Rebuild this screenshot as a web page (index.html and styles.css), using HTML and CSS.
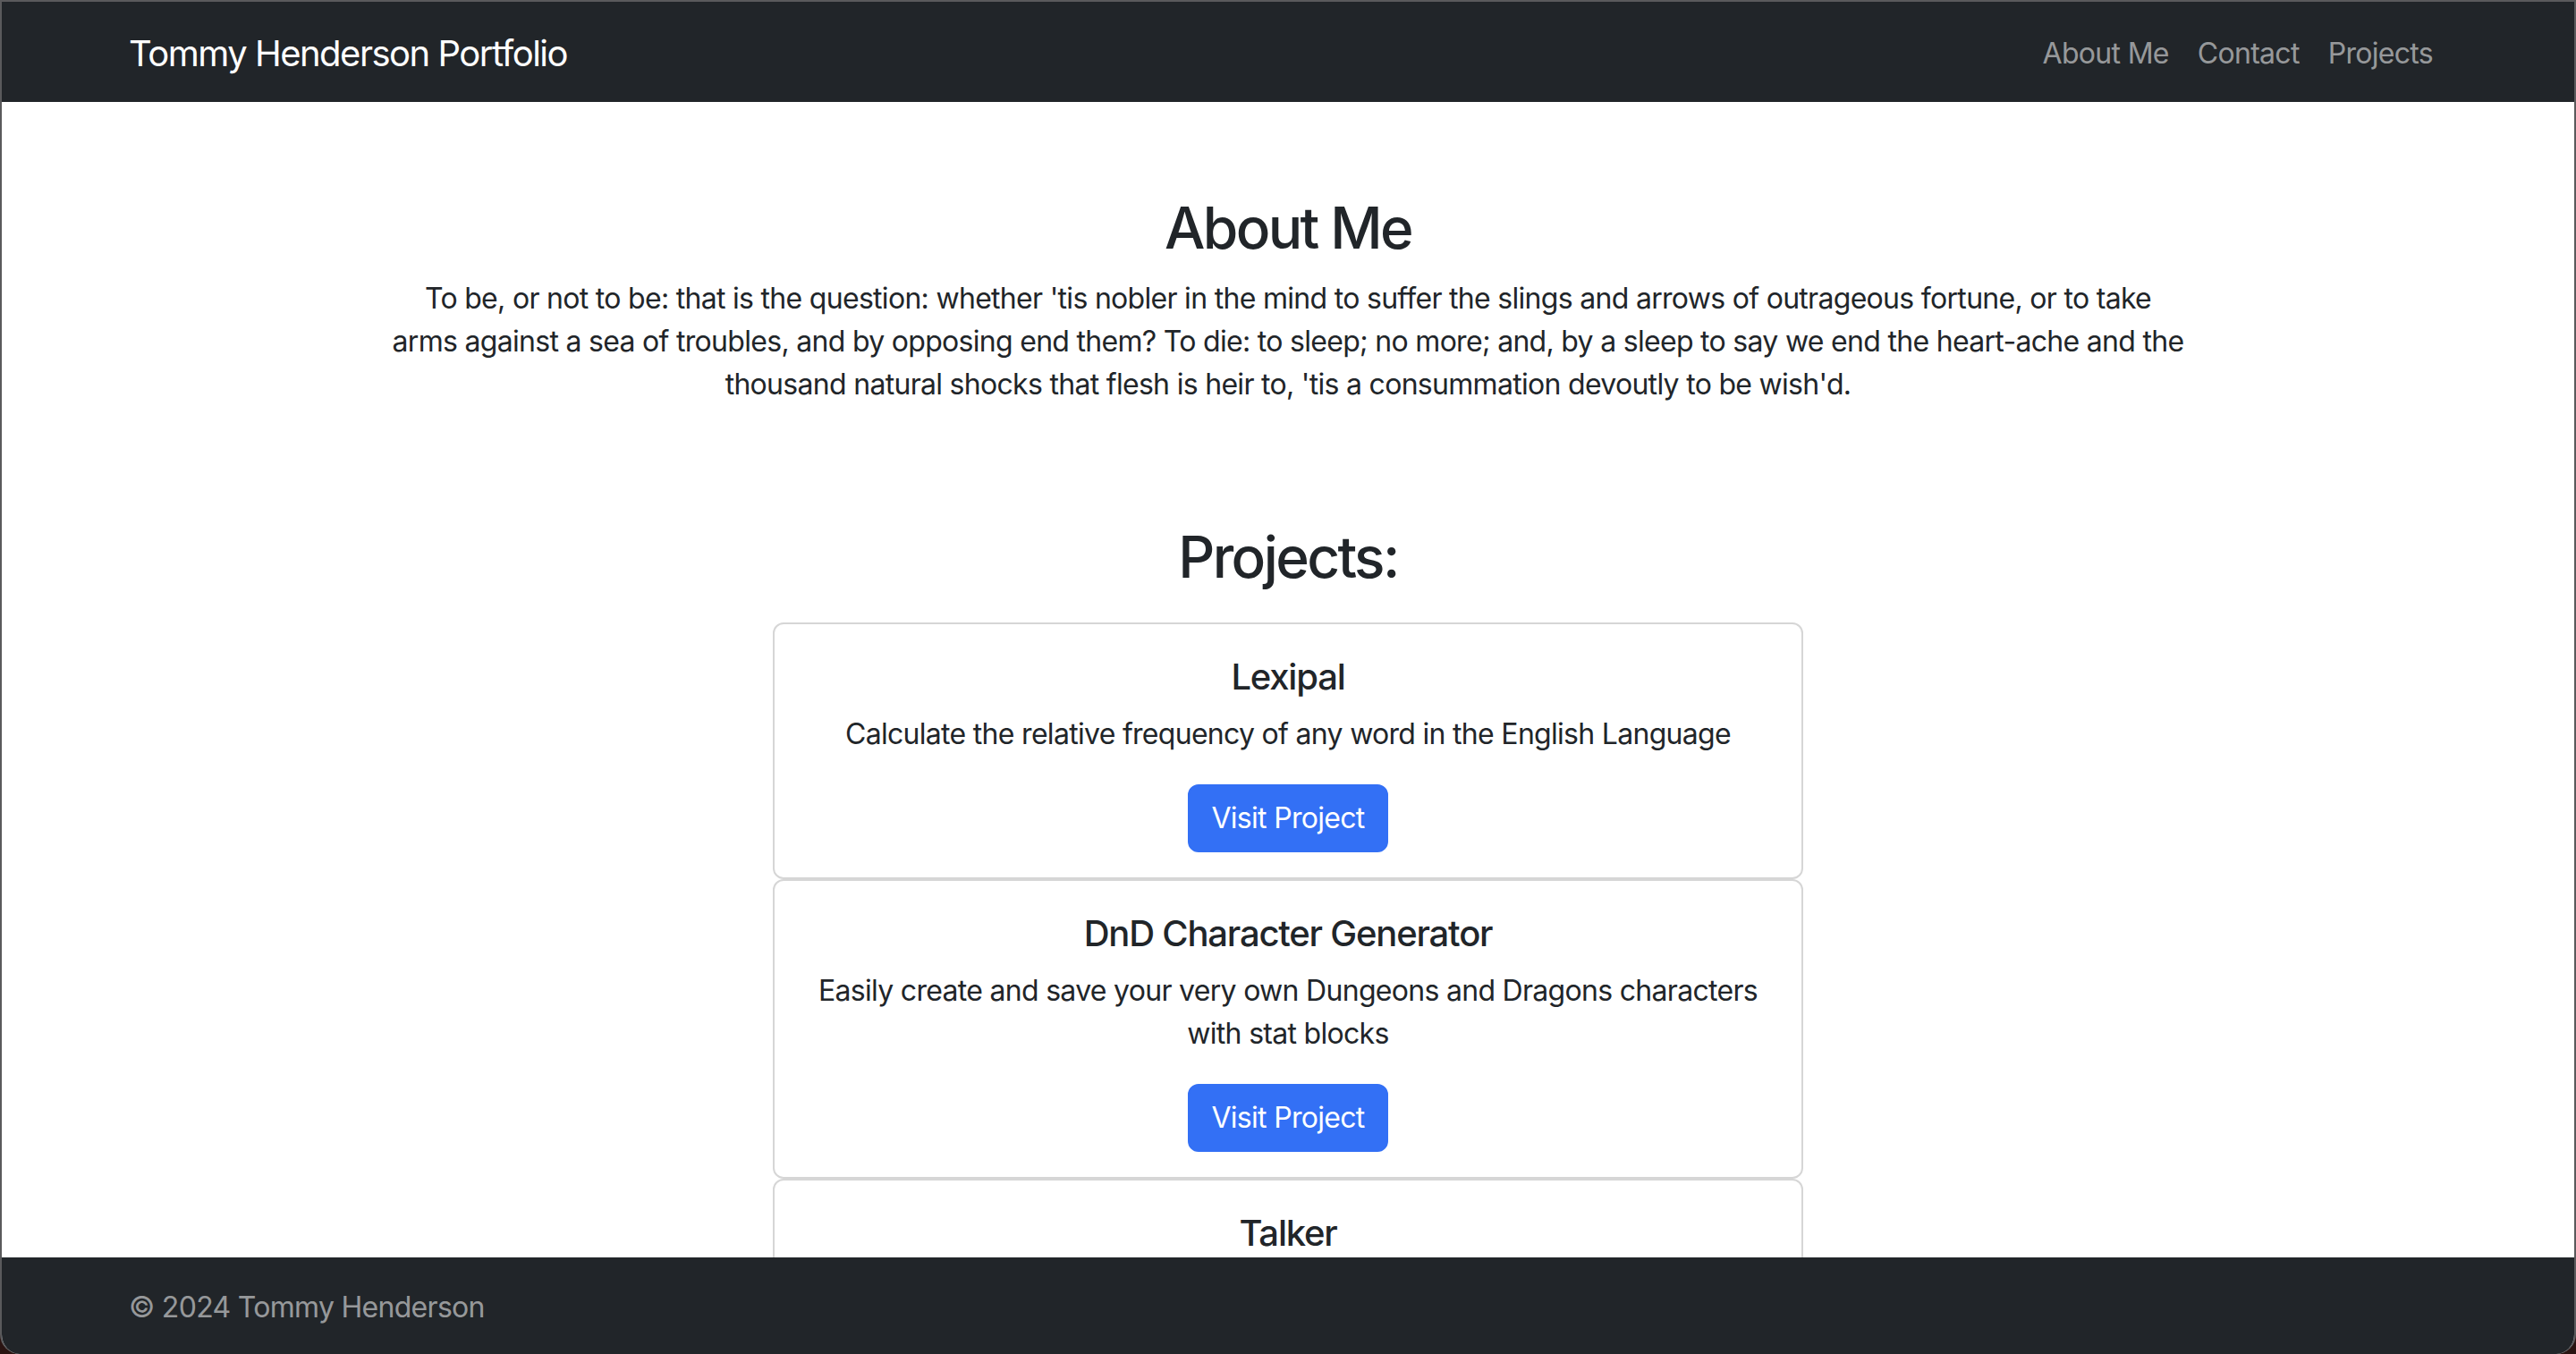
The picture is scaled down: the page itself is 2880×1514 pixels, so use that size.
FILE: index.html
```html
<!DOCTYPE html>
<html lang="en">
<head>
<meta charset="utf-8">
<title>Tommy Henderson Portfolio</title>
<link rel="stylesheet" href="styles.css">
</head>
<body>
<div class="frame">
  <nav class="navbar">
    <div class="container nav-inner">
      <a class="brand" href="#">Tommy Henderson Portfolio</a>
      <ul class="nav-links">
        <li><a href="#about">About Me</a></li>
        <li><a href="#contact">Contact</a></li>
        <li><a href="#projects">Projects</a></li>
      </ul>
    </div>
  </nav>
  <main class="main">
    <section class="about" id="about">
      <h2 class="heading">About Me</h2>
      <p class="about-text">To be, or not to be: that is the question: whether 'tis nobler in the mind to suffer the slings and arrows of outrageous fortune, or to take arms against a sea of troubles, and by opposing end them? To die: to sleep; no more; and, by a sleep to say we end the heart-ache and the thousand natural shocks that flesh is heir to, 'tis a consummation devoutly to be wish'd.</p>
    </section>
    <section class="projects" id="projects">
      <h2 class="heading">Projects:</h2>
      <div class="card-list">
        <div class="card">
          <h5 class="card-title">Lexipal</h5>
          <p class="card-text">Calculate the relative frequency of any word in the English Language</p>
          <a class="btn" href="#">Visit Project</a>
        </div>
        <div class="card">
          <h5 class="card-title">DnD Character Generator</h5>
          <p class="card-text">Easily create and save your very own Dungeons and Dragons characters with stat blocks</p>
          <a class="btn" href="#">Visit Project</a>
        </div>
        <div class="card">
          <h5 class="card-title">Talker</h5>
          <p class="card-text">Chat with friends in real time</p>
          <a class="btn" href="#">Visit Project</a>
        </div>
      </div>
    </section>
  </main>
  <footer class="footer">
    <div class="container">
      <span class="footer-text">© 2024 Tommy Henderson</span>
    </div>
  </footer>
</div>
</body>
</html>
```
FILE: styles.css
```css
* { box-sizing: border-box; }
html { background: #2a1412; }
body {
  margin: 0;
  font-family: "Inter", "Liberation Sans", sans-serif;
  font-size: 32px;
  line-height: 1.5;
  letter-spacing: -0.7px;
  color: #212529;
}
.frame {
  height: 1514px;
  display: flex;
  flex-direction: column;
  background: #fff;
  border: 2px solid #5a5a5c;
  border-bottom: none;
  border-radius: 0 0 22px 22px;
  overflow: hidden;
}
.container {
  width: 100%;
  max-width: 2640px;
  margin: 0 auto;
  padding: 0 24px;
}
.navbar {
  background: #212529;
  padding: 16px 0;
  flex: none;
}
.nav-inner {
  display: flex;
  align-items: center;
  justify-content: space-between;
}
.brand {
  color: #fff;
  text-decoration: none;
  font-size: 40px;
  line-height: 60px;
  letter-spacing: -1.5px;
  padding: 12px 0 8px;
}
.nav-links {
  display: flex;
  list-style: none;
  margin: 0;
  padding: 0;
}
.nav-links a {
  display: block;
  padding: 18px 16px 14px;
  color: rgba(255,255,255,.55);
  text-decoration: none;
  line-height: 48px;
}
.main {
  flex: 1;
  overflow: hidden;
  text-align: center;
}
.heading {
  font-size: 64px;
  font-weight: 500;
  line-height: 1.2;
  letter-spacing: -2.6px;
  margin: 0 0 16px;
}
.about { padding-top: 103px; }
.about-text {
  max-width: 2003px;
  margin: 0 auto 32px;
}
.projects { padding-top: 99px; }
.card-list {
  width: 1152px;
  margin: 34px auto 0;
  display: flex;
  flex-direction: column;
}
.card {
  border: 2px solid #d6d6d6;
  border-radius: 12px;
  padding: 35px 32px 28px;
}
.card-title {
  font-size: 40px;
  font-weight: 500;
  line-height: 1.2;
  letter-spacing: -1.2px;
  margin: 0 0 16px;
}
.card-text {
  margin: 0 0 32px;
}
.btn {
  display: inline-block;
  background: #3370f5;
  border: 2px solid #3370f5;
  color: #fff;
  text-decoration: none;
  border-radius: 12px;
  padding: 12px 24px;
  line-height: 48px;
}
.footer {
  flex: none;
  height: 108px;
  background: #212529;
  padding-top: 32px;
}
.footer-text {
  color: rgba(255,255,255,.55);
  line-height: 48px;
}
```
